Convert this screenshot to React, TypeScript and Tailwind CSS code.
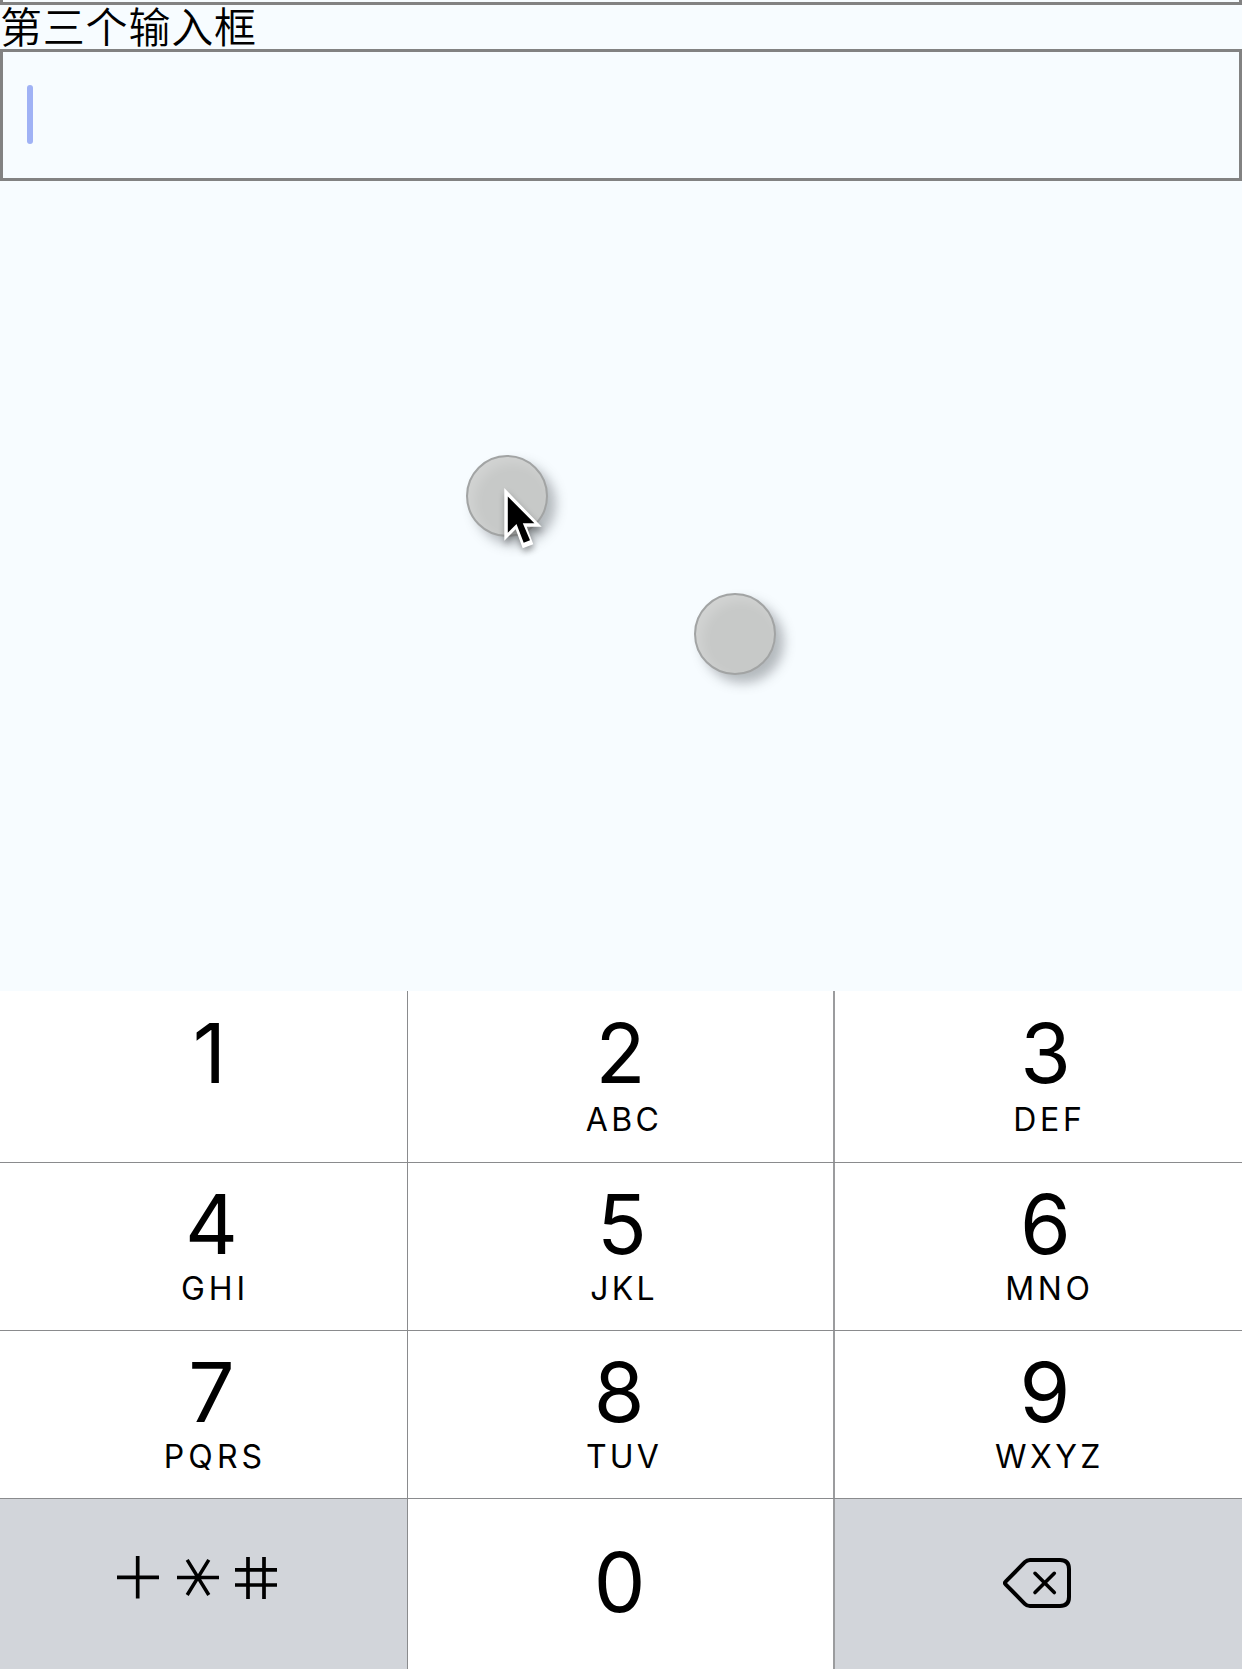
type KeySpec = { digit: string; nudge?: string; letters?: string; tracking?: string };

const rows: KeySpec[][] = [
  [
    { digit: "1", nudge: "pr-[3px]" },
    { digit: "2", letters: "ABC", tracking: "tracking-[3.4px]" },
    { digit: "3", letters: "DEF", tracking: "tracking-[3.7px]" },
  ],
  [
    { digit: "4", nudge: "pl-[1px]", letters: "GHI", tracking: "tracking-[4px]" },
    { digit: "5", nudge: "pl-[3px]", letters: "JKL", tracking: "tracking-[3.2px]" },
    { digit: "6", letters: "MNO", tracking: "tracking-[3.7px]" },
  ],
  [
    { digit: "7", nudge: "pl-[1px]", letters: "PQRS", tracking: "tracking-[4.1px]" },
    { digit: "8", nudge: "pr-[3px]", letters: "TUV", tracking: "tracking-[3.2px]" },
    { digit: "9", nudge: "pr-[1px]", letters: "WXYZ", tracking: "tracking-[3.4px]" },
  ],
];

const rowPadding = ["pt-[22px]", "pt-[21px]", "pt-[21px]"];
const letterGap = ["mt-[9px]", "mt-[7px]", "mt-[7px]"];
const columnBorder = ["border-r border-[#8a8b8d]", "border-r-2 border-[#9b9c9e]", ""];
const columnShift = ["pl-[15px]", "", "pl-[14px]"];
const letterShift = ["pl-[8px]", "pl-[7px]", "pl-[8px]"];

function Digit({ children, nudge = "" }: { children: string; nudge?: string }) {
  return <span className={`text-[82px] leading-[82px] ${nudge}`}>{children}</span>;
}

function Key({ spec, row, col }: { spec: KeySpec; row: number; col: number }) {
  return (
    <button className={`flex flex-col items-center bg-white ${rowPadding[row]} ${columnBorder[col]} ${columnShift[col]}`}>
      <Digit nudge={spec.nudge}>{spec.digit}</Digit>
      {spec.letters && (
        <span className={`text-[32px] leading-[32px] ${letterShift[col]} ${spec.tracking} ${letterGap[row]}`}>{spec.letters}</span>
      )}
    </button>
  );
}

function SymbolsIcon() {
  return (
    <svg className="h-[44px] w-[162px]" viewBox="116 1556 162 44" fill="none" stroke="black" strokeWidth="3.7">
      <path d="M117 1577.4H159M137.7 1556V1598.4" />
      <path d="M177 1577.4H219M187.2 1559.8L208.8 1595M208.8 1559.8L187.2 1595" strokeWidth="3.5" />
      <path d="M235 1569.8H277M235 1585H277M248 1557V1599M264 1557V1599" />
    </svg>
  );
}

function DeleteIcon() {
  return (
    <svg className="h-[52px] w-[70px]" viewBox="1002 1557 70 52" fill="none" stroke="black" strokeWidth="4" strokeLinecap="round" strokeLinejoin="round">
      <path d="M1005.6 1581.7L1024.8 1562.2Q1027 1560 1030 1560H1060Q1069 1560 1069 1569V1597Q1069 1606 1060 1606H1030Q1027 1606 1024.8 1603.8L1005.6 1584.3Q1004.2 1583 1005.6 1581.7Z" />
      <path d="M1035 1573.3L1054.3 1592.6M1054.3 1573.3L1035 1592.6" strokeWidth="3.6" />
    </svg>
  );
}

function TouchPoint({ className }: { className: string }) {
  return (
    <div className={`absolute size-[82px] rounded-full border-2 border-[#a2a4a4] bg-[#c7c9c8] shadow-[8px_8px_12px_rgba(60,66,72,0.36),inset_6px_6px_12px_rgba(255,255,255,0.2)] ${className}`} />
  );
}

function Pointer() {
  return (
    <svg className="absolute left-[500px] top-[484px] h-[70px] w-[50px] overflow-visible drop-shadow-[1px_4px_3px_rgba(0,0,0,0.35)]" viewBox="500 484 50 70">
      <path d="M504.3 488L504.3 540.7L515.7 529.3L522.7 548.3L533.3 544.3L526.7 526.7H541.7Z" fill="white" />
      <path d="M507.8 496.5V532.7L516.5 524L523.7 542.8L530 540.2L522.8 523.3H534.4Z" fill="black" />
    </svg>
  );
}

export default function App() {
  return (
    <main className="relative flex h-[1669px] w-[1242px] flex-col overflow-hidden bg-[#f7fcff] font-[Inter,'Noto_Sans_CJK_SC',sans-serif] text-black">
      <div className="h-[5px] border-x-[3px] border-b-[3px] border-[#828282]" />
      <label className="h-[44px] whitespace-nowrap font-['Noto_Sans_CJK_SC',sans-serif] text-[42px] font-[350] leading-[39px] tracking-[0.8px]">第三个输入框</label>
      <div className="flex h-[132px] items-start border-[3px] border-[#828282] pl-[24px] pt-[33px]">
        <div className="h-[59px] w-[6px] rounded-full bg-[#a0b2f5]" />
      </div>
      <section className="flex-1" />
      <section className="grid grid-cols-[408px_427px_407px] grid-rows-[172px_168px_168px_170px]">
        {rows.map((keys, row) => (
          <div key={row} className="col-span-3 grid grid-cols-subgrid border-b border-[#8a8b8d]">
            {keys.map((spec, col) => (
              <Key key={spec.digit} spec={spec} row={row} col={col} />
            ))}
          </div>
        ))}
        <button aria-label="+*#" className="flex items-start border-r border-[#8a8b8d] bg-[#d2d5da] pl-[116px] pt-[57px]">
          <SymbolsIcon />
        </button>
        <button className="flex flex-col items-center border-r-2 border-[#9b9c9e] bg-white pt-[43px]">
          <Digit nudge="pr-[2px]">0</Digit>
        </button>
        <button aria-label="Delete" className="flex items-start bg-[#d2d5da] pl-[167px] pt-[58px]">
          <DeleteIcon />
        </button>
      </section>
      <TouchPoint className="left-[466px] top-[455px]" />
      <TouchPoint className="left-[694px] top-[593px]" />
      <Pointer />
    </main>
  );
}
